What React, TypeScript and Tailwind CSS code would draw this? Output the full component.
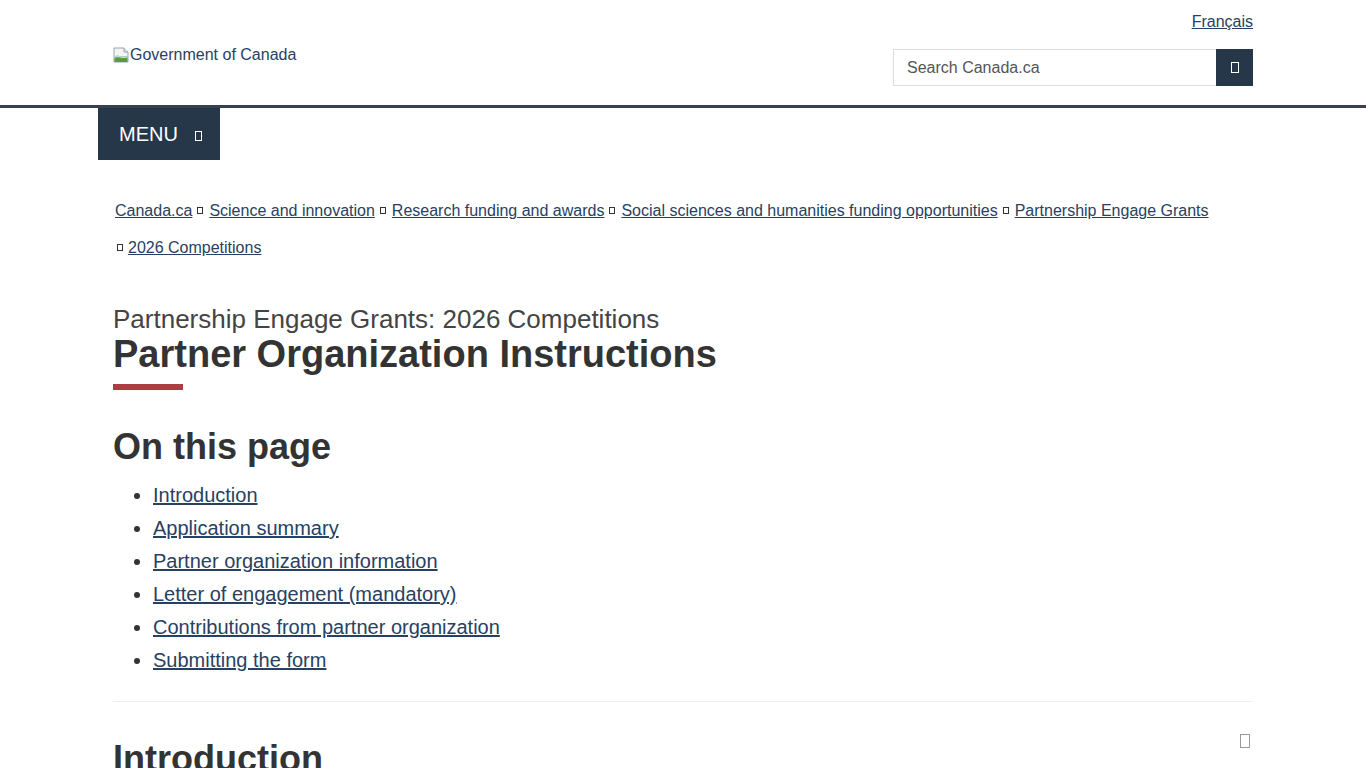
import React from 'react';

// placeholder box drawn by the browser when the icon font is missing
function Tofu({ className = '' }: { className?: string }) {
  return <span className={`inline-block border border-current align-middle ${className}`} />;
}

const crumbs = [
  'Canada.ca',
  'Science and innovation',
  'Research funding and awards',
  'Social sciences and humanities funding opportunities',
  'Partnership Engage Grants',
  '2026 Competitions',
];

const toc = [
  'Introduction',
  'Application summary',
  'Partner organization information',
  'Letter of engagement (mandatory)',
  'Contributions from partner organization',
  'Submitting the form',
];

export default function App() {
  return (
    <div className="min-h-screen bg-white text-[#333] font-['Liberation_Sans',Arial,sans-serif]">
      <header>
        <div className="border-b-[3px] border-[#38414d]">
          <div className="mx-auto w-[1140px] h-[105px]">
            <div className="flex justify-end pt-[10px]">
              <a href="#" className="text-[16px] leading-[23px] text-[#284162] underline">
                Français
              </a>
            </div>
            <div className="flex justify-between items-start mt-[16px]">
              <div className="flex items-center -mt-[3px] text-[16px] leading-[18px] text-[#284162]">
                <svg width="16" height="16" viewBox="0 0 16 16" className="mr-[1px]">
                  <path d="M1 1h10l4 4v10H1z" fill="#f4f4f4" stroke="#9aa4ad" />
                  <path d="M11 1v4h4" fill="#e6e6e6" stroke="#9aa4ad" />
                  <path d="M1.5 15V10c3-3 6 1 13-1v6z" fill="#5a9c3a" />
                  <path d="M1.5 10c3-3 6 1 13-1v1.5c-6 2-10-2-13 1z" fill="#bcd7ef" />
                </svg>
                <span>Government of Canada</span>
              </div>
              <form className="flex" onSubmit={(e) => e.preventDefault()}>
                <input
                  type="search"
                  placeholder="Search Canada.ca"
                  className="w-[323px] h-[37px] border border-[#ddd] border-r-0 pl-[13px] text-[16px] text-[#555] placeholder:text-[#555] outline-none"
                />
                <button className="w-[37px] h-[37px] bg-[#26374a] text-white flex items-center justify-center">
                  <Tofu className="w-[8px] h-[11px]" />
                </button>
              </form>
            </div>
          </div>
        </div>
        <div className="mx-auto w-[1170px]">
          <button className="w-[122px] h-[52px] bg-[#26374a] text-white flex items-center pl-[21px]">
            <span className="text-[20px] leading-none">MENU</span>
            <Tofu className="ml-[17px] mt-[4px] w-[7px] h-[10px]" />
          </button>
        </div>
      </header>

      <main className="mx-auto w-[1140px]">
        <nav className="mt-[32px] pl-[2px] w-[1100px]">
          <ol className="flex flex-wrap text-[16px] leading-[37px]">
            {crumbs.map((c, i) => (
              <li key={c} className="flex items-center">
                {i > 0 && (
                  <Tofu
                    className={`w-[6px] h-[7px] text-[#333] ${i === 5 ? 'ml-[2px] mr-[5px]' : 'ml-[5px] mr-[6px]'}`}
                  />
                )}
                <a href="#" className="text-[#284162] underline">
                  {c}
                </a>
              </li>
            ))}
          </ol>
        </nav>

        <h1 className="mt-[39px]">
          <span className="block text-[26px] leading-[28px] text-[#444]">
            Partnership Engage Grants: 2026 Competitions
          </span>
          <span className="block text-[38px] leading-[42px] font-bold text-[#333]">
            Partner Organization Instructions
          </span>
        </h1>
        <div className="mt-[9px] w-[70px] h-[6px] bg-[#af3c43]" />

        <h2 className="mt-[36px] text-[36px] leading-[42px] font-bold">On this page</h2>
        <ul className="mt-[11px] pl-[40px] list-disc text-[20px] leading-[33px]">
          {toc.map((t) => (
            <li key={t}>
              <a href="#" className="text-[#284162] underline">
                {t}
              </a>
            </li>
          ))}
        </ul>

        <div className="mt-[24px] border-t border-[#eee]" />

        <section className="flex justify-between">
          <h2 className="mt-[36px] text-[36px] leading-[42px] font-bold">Introduction</h2>
          <Tofu className="mt-[32px] mr-[3px] w-[10px] h-[14px] text-[#999]" />
        </section>
      </main>
    </div>
  );
}
